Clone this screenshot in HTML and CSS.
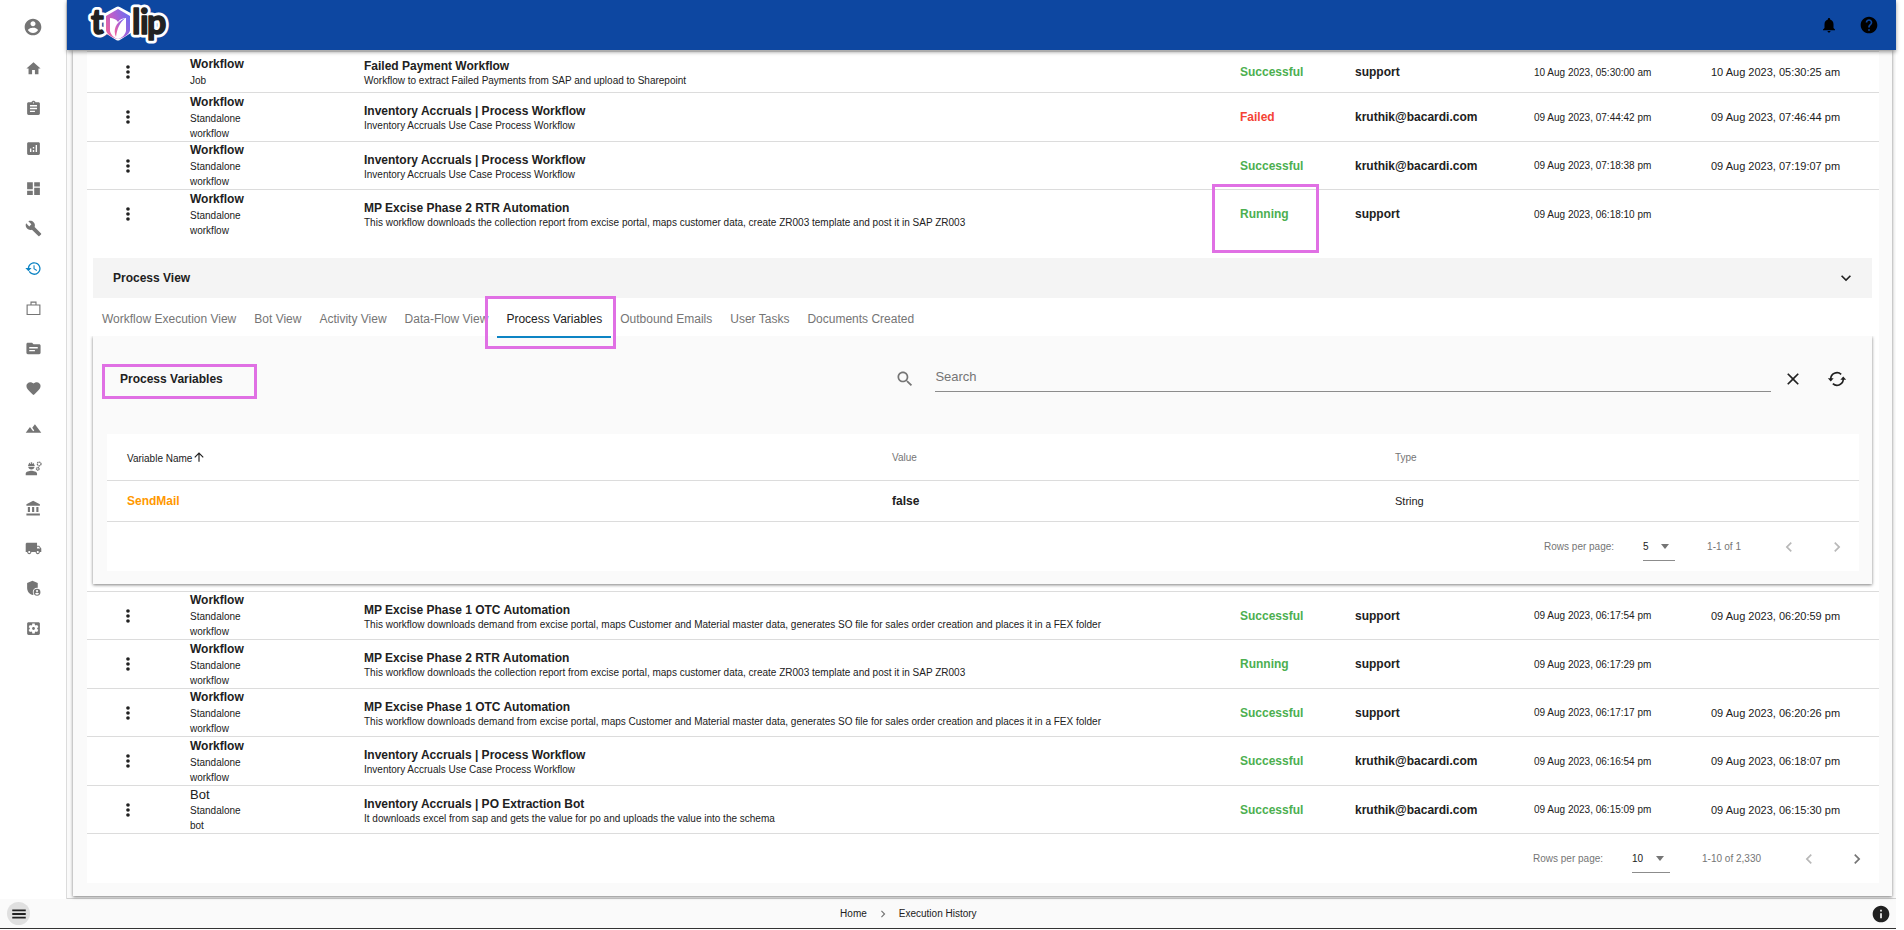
FILE: index.html
```html
<!DOCTYPE html>
<html lang="en">
<head>
    <meta charset="utf-8">
    <title>Execution History</title>
    <link rel="stylesheet" href="styles.css">
</head>
<body>
    <!-- icon set -->
    <svg class="sprite" aria-hidden="true">
        <symbol id="account" viewBox="0 0 24 24"><path d="M12 2C6.48 2 2 6.48 2 12s4.48 10 10 10 10-4.48 10-10S17.52 2 12 2zm0 3c1.66 0 3 1.34 3 3s-1.34 3-3 3-3-1.34-3-3 1.34-3 3-3zm0 14.2c-2.5 0-4.71-1.28-6-3.22.03-1.99 4-3.08 6-3.08 1.99 0 5.97 1.09 6 3.08-1.29 1.94-3.5 3.22-6 3.22z"/></symbol>
        <symbol id="home" viewBox="0 0 24 24"><path d="M10 20v-6h4v6h5v-8h3L12 3 2 12h3v8z"/></symbol>
        <symbol id="assignment" viewBox="0 0 24 24"><path d="M19 3h-4.18C14.4 1.84 13.3 1 12 1c-1.3 0-2.4.84-2.82 2H5c-1.1 0-2 .9-2 2v14c0 1.1.9 2 2 2h14c1.1 0 2-.9 2-2V5c0-1.1-.9-2-2-2zm-7 0c.55 0 1 .45 1 1s-.45 1-1 1-1-.45-1-1 .45-1 1-1zm2 14H7v-2h7v2zm3-4H7v-2h10v2zm0-4H7V7h10v2z"/></symbol>
        <symbol id="analytics" viewBox="0 0 24 24"><path d="M19 3H5c-1.1 0-2 .9-2 2v14c0 1.1.9 2 2 2h14c1.1 0 2-.9 2-2V5c0-1.1-.9-2-2-2zM9 17H7v-5h2v5zm4 0h-2v-3h2v3zm0-5h-2v-2h2v2zm4 5h-2V7h2v10z"/></symbol>
        <symbol id="dashboard" viewBox="0 0 24 24"><path d="M3 13h8V3H3v10zm0 8h8v-6H3v6zm10 0h8V11h-8v10zm0-18v6h8V3h-8z"/></symbol>
        <symbol id="build" viewBox="0 0 24 24"><path d="M22.7 19l-9.1-9.1c.9-2.3.4-5-1.5-6.9-2-2-5-2.4-7.4-1.3L9 6 6 9 1.6 4.7C.4 7.1.9 10.1 2.9 12.1c1.9 1.9 4.6 2.4 6.9 1.5l9.1 9.1c.4.4 1 .4 1.4 0l2.3-2.3c.5-.4.5-1.1.1-1.4z"/></symbol>
        <symbol id="history" viewBox="0 0 24 24"><path d="M13 3C8.3 3 4.3 6.6 4 11.2H.5L4.9 16l4.3-4.8H5.8C6.2 7.7 9.3 4.8 13 4.8c4 0 7.2 3.2 7.2 7.2s-3.2 7.2-7.2 7.2c-2.6 0-4.9-1.4-6.2-3.5l-1.5 1C6.9 19.3 9.8 21 13 21c5 0 9-4 9-9s-4-9-9-9zm-1 4.5v5.3l4.3 2.6.7-1.2-3.5-2.1V7.5H12z"/></symbol>
        <symbol id="work" viewBox="0 0 24 24"><path d="M3 7h18v13.5H3zM8.5 7V3h7v4" fill="none" stroke="currentColor" stroke-width="1.6"/></symbol>
        <symbol id="source" viewBox="0 0 24 24"><path d="M20 6h-8l-2-2H4c-1.1 0-2 .9-2 2v12c0 1.1.9 2 2 2h16c1.1 0 2-.9 2-2V8c0-1.1-.9-2-2-2zm-6 10H6v-2h8v2zm4-4H6v-2h12v2z"/></symbol>
        <symbol id="favorite" viewBox="0 0 24 24"><path d="M12 21.35l-1.45-1.32C5.4 15.36 2 12.28 2 8.5 2 5.42 4.42 3 7.5 3c1.74 0 3.41.81 4.5 2.09C13.09 3.81 14.76 3 16.5 3 19.58 3 22 5.42 22 8.5c0 3.78-3.4 6.86-8.55 11.54L12 21.35z"/></symbol>
        <symbol id="terrain" viewBox="0 0 24 24"><path d="M14 6l-3.75 5 2.85 3.8-1.6 1.2C9.81 13.75 7 10 7 10l-6 8h22L14 6z"/></symbol>
        <symbol id="engineering" viewBox="0 0 24 24"><path d="M9 15c-2.7 0-8 1.3-8 4v2.5h16V19c0-2.7-5.3-4-8-4zM4.5 9.5h9c-.2 2.2-2.2 4-4.5 4s-4.3-1.8-4.5-4zM13.8 8.5H4.2V7.3h.6C4.9 5.7 5.9 4.3 7.2 3.6V5.5h1V3.2h1.6v2.3h1V3.6c1.3.7 2.3 2.1 2.4 3.7h.6z"/><g fill="none" stroke="currentColor" stroke-width="1.8"><circle cx="20" cy="5.5" r="2.6" stroke-dasharray="2 .72"/><circle cx="18" cy="12.5" r="1.9" stroke-dasharray="1.6 .4"/></g></symbol>
        <symbol id="bank" viewBox="0 0 24 24"><path d="M4 10v7h3v-7H4zm6 0v7h3v-7h-3zM2 22h19v-3H2v3zm14-12v7h3v-7h-3zm-4.5-9L2 6v2h19V6l-9.5-5z"/></symbol>
        <symbol id="shipping" viewBox="0 0 24 24"><path d="M20 8h-3V4H3c-1.1 0-2 .9-2 2v11h2c0 1.66 1.34 3 3 3s3-1.34 3-3h6c0 1.66 1.34 3 3 3s3-1.34 3-3h2v-5l-3-4zM6 18.5c-.83 0-1.5-.67-1.5-1.5s.67-1.5 1.5-1.5 1.5.67 1.5 1.5-.67 1.5-1.5 1.5zm13.5-9l1.96 2.5H17V9.5h2.5zm-1.5 9c-.83 0-1.5-.67-1.5-1.5s.67-1.5 1.5-1.5 1.5.67 1.5 1.5-.67 1.5-1.5 1.5z"/></symbol>
        <symbol id="admin" viewBox="0 0 24 24"><path d="M17 11c.34 0 .67.04 1 .09V4.27L10.5 1 3 4.27v6.91c0 4.54 3.2 8.79 7.5 9.82.55-.13 1.08-.32 1.6-.55-.69-.98-1.1-2.17-1.1-3.45 0-3.31 2.69-6 6-6z"/><path d="M17 12.5a4.8 4.8 0 1 0 0 9.6 4.8 4.8 0 0 0 0-9.6zm0 1.6a1.5 1.5 0 1 1 0 3 1.5 1.5 0 0 1 0-3zm0 6.6c-1.1 0-2.1-.6-2.7-1.4.1-.9 1.8-1.3 2.7-1.3s2.6.4 2.7 1.3c-.6.8-1.6 1.4-2.7 1.4z"/></symbol>
        <symbol id="settings" viewBox="0 0 24 24"><path d="M12 10c-1.1 0-2 .9-2 2s.9 2 2 2 2-.9 2-2-.9-2-2-2zm7-7H5c-1.11 0-2 .9-2 2v14c0 1.1.89 2 2 2h14c1.11 0 2-.9 2-2V5c0-1.1-.89-2-2-2zm-1.75 9c0 .23-.02.46-.05.68l1.48 1.16c.13.11.17.3.08.45l-1.4 2.42c-.09.15-.27.21-.43.15l-1.74-.7c-.36.28-.76.51-1.18.69l-.26 1.85c-.03.17-.18.3-.35.3h-2.8c-.17 0-.32-.13-.35-.29l-.26-1.85c-.43-.18-.82-.41-1.18-.69l-1.74.7c-.16.06-.34 0-.43-.15l-1.4-2.42c-.09-.15-.05-.34.08-.45l1.48-1.16c-.03-.23-.05-.46-.05-.69 0-.23.02-.46.05-.68l-1.48-1.16c-.13-.11-.17-.3-.08-.45l1.4-2.42c.09-.15.27-.21.43-.15l1.74.7c.36-.28.76-.51 1.18-.69l.26-1.85c.03-.17.18-.3.35-.3h2.8c.17 0 .32.13.35.29l.26 1.85c.43.18.82.41 1.18.69l1.74-.7c.16-.06.34 0 .43.15l1.4 2.42c.09.15.05.34-.08.45l-1.48 1.16c.03.23.05.46.05.69z"/></symbol>
        <symbol id="bell" viewBox="0 0 24 24"><path d="M12 22c1.1 0 2-.9 2-2h-4c0 1.1.89 2 2 2zm6-6v-5c0-3.07-1.64-5.64-4.5-6.32V4c0-.83-.67-1.5-1.5-1.5s-1.5.67-1.5 1.5v.68C7.63 5.36 6 7.92 6 11v5l-2 2v1h16v-1l-2-2z"/></symbol>
        <symbol id="help" viewBox="0 0 24 24"><path d="M12 2C6.48 2 2 6.48 2 12s4.48 10 10 10 10-4.48 10-10S17.52 2 12 2zm1 17h-2v-2h2v2zm2.07-7.75l-.9.92C13.45 12.9 13 13.5 13 15h-2v-.5c0-1.1.45-2.1 1.17-2.83l1.24-1.26c.37-.36.59-.86.59-1.41 0-1.1-.9-2-2-2s-2 .9-2 2H8c0-2.21 1.79-4 4-4s4 1.79 4 4c0 .88-.36 1.68-.93 2.25z"/></symbol>
        <symbol id="info" viewBox="0 0 24 24"><path d="M12 2C6.48 2 2 6.48 2 12s4.48 10 10 10 10-4.48 10-10S17.52 2 12 2zm1 15h-2v-6h2v6zm0-8h-2V7h2v2z"/></symbol>
        <symbol id="more" viewBox="0 0 24 24"><circle cx="12" cy="6" r="2.2"/><circle cx="12" cy="12" r="2.2"/><circle cx="12" cy="18" r="2.2"/></symbol>
        <symbol id="menu" viewBox="0 0 24 24"><path d="M3 18h18v-2.4H3V18zm0-4.8h18v-2.4H3v2.4zM3 6v2.4h18V6H3z"/></symbol>
        <symbol id="down" viewBox="0 0 24 24"><path d="M7.41 8.59L12 13.17l4.59-4.58L18 10l-6 6-6-6 1.41-1.41z"/></symbol>
        <symbol id="left" viewBox="0 0 24 24"><path d="M15.41 7.41L14 6l-6 6 6 6 1.41-1.41L10.83 12z"/></symbol>
        <symbol id="right" viewBox="0 0 24 24"><path d="M10 6L8.59 7.41 13.17 12l-4.58 4.59L10 18l6-6z"/></symbol>
        <symbol id="search-icon" viewBox="0 0 24 24"><path d="M15.5 14h-.79l-.28-.27C15.41 12.59 16 11.11 16 9.5 16 5.91 13.09 3 9.5 3S3 5.91 3 9.5 5.91 16 9.5 16c1.61 0 3.09-.59 4.23-1.57l.27.28v.79l5 4.99L20.49 19l-4.99-5zm-6 0C7.01 14 5 11.99 5 9.5S7.01 5 9.5 5 14 7.01 14 9.5 11.99 14 9.5 14z"/></symbol>
        <symbol id="clear" viewBox="0 0 24 24"><path d="M19 6.41L17.59 5 12 10.59 6.41 5 5 6.41 10.59 12 5 17.59 6.41 19 12 13.41 17.59 19 19 17.59 13.41 12z"/></symbol>
        <symbol id="refresh" viewBox="0 0 24 24"><path d="M4.5 12A7.5 7.5 0 0 1 17 6.4M19.5 12A7.5 7.5 0 0 1 7 17.6" fill="none" stroke="currentColor" stroke-width="2"/><path d="M1 11h7l-3.5 4zM16 13h7l-3.5-4z"/></symbol>
        <symbol id="up" viewBox="0 0 24 24"><path d="M4 12l1.41 1.41L11 7.83V20h2V7.83l5.58 5.59L20 12l-8-8-8 8z"/></symbol>
    </svg>

    <div class="app">
        <div class="layout">
            <nav class="sidebar">
                <a href="#" class="profile" aria-label="Profile"><svg><use href="#account"/></svg></a>
                <a href="#" aria-label="Home"><svg><use href="#home"/></svg></a>
                <a href="#" aria-label="Tasks"><svg><use href="#assignment"/></svg></a>
                <a href="#" aria-label="Analytics"><svg><use href="#analytics"/></svg></a>
                <a href="#" aria-label="Dashboard"><svg><use href="#dashboard"/></svg></a>
                <a href="#" aria-label="Build"><svg><use href="#build"/></svg></a>
                <a href="#" class="active" aria-label="Execution history"><svg><use href="#history"/></svg></a>
                <a href="#" aria-label="Work"><svg><use href="#work"/></svg></a>
                <a href="#" aria-label="Files"><svg><use href="#source"/></svg></a>
                <a href="#" aria-label="Health"><svg><use href="#favorite"/></svg></a>
                <a href="#" aria-label="Environments"><svg><use href="#terrain"/></svg></a>
                <a href="#" aria-label="Engineering"><svg><use href="#engineering"/></svg></a>
                <a href="#" aria-label="Organisation"><svg><use href="#bank"/></svg></a>
                <a href="#" aria-label="Deployments"><svg><use href="#shipping"/></svg></a>
                <a href="#" aria-label="Admin"><svg><use href="#admin"/></svg></a>
                <a href="#" aria-label="Settings"><svg><use href="#settings"/></svg></a>
            </nav>

            <div class="page">
                <header class="topbar">
                    <svg class="logo" viewBox="0 0 90 46" role="img" aria-label="tulip">
                        <defs>
                            <linearGradient id="petal" x1="0" y1="0.8" x2="1" y2="0.3">
                                <stop offset="0" stop-color="#f0649c"/>
                                <stop offset="0.5" stop-color="#b45fd0"/>
                                <stop offset="1" stop-color="#6d6df0"/>
                            </linearGradient>
                        </defs>
                        <g class="logo-outline">
                            <text x="5 46 54 61" y="32">tlip</text>
                            <path d="M32 8l11 6v14l-11 7-11-7V14z"/>
                        </g>
                        <text class="logo-text" x="5 46 54 61" y="32">tlip</text>
                        <path d="M32 7l12 7v14c0 3-5 8-12 9-7-1-12-6-12-9V14z" fill="url(#petal)"/>
                        <path d="M24 16c3 0 6 1 8 4 2-3 5-4 8-4v13c-1 4-4 7-8 8-4-1-7-4-8-8z" fill="#fff"/>
                        <path d="M30 35c-3-7-1-14 9-19-5 5-8 10-9 19z" fill="url(#petal)"/>
                    </svg>
                    <button class="icon-btn bell" aria-label="Notifications"><svg><use href="#bell"/></svg></button>
                    <button class="icon-btn" aria-label="Help"><svg><use href="#help"/></svg></button>
                </header>

                <main class="card">
                    <div class="history">
                        <table class="runs">
                            <colgroup>
                                <col class="col-menu"><col class="col-type"><col><col class="col-status"><col class="col-user"><col class="col-date"><col class="col-end">
                            </colgroup>
                            <tbody>
                                <tr class="short">
                                    <td class="menu"><button class="icon-btn" aria-label="More"><svg><use href="#more"/></svg></button></td>
                                    <td><p class="type">Workflow</p><p class="mode">Job</p></td>
                                    <td><p class="name">Failed Payment Workflow</p><p class="desc">Workflow to extract Failed Payments from SAP and upload to Sharepoint</p></td>
                                    <td class="status">Successful</td>
                                    <td class="user">support</td>
                                    <td class="started">10 Aug 2023, 05:30:00 am</td>
                                    <td class="ended">10 Aug 2023, 05:30:25 am</td>
                                </tr>
                                <tr>
                                    <td class="menu"><button class="icon-btn" aria-label="More"><svg><use href="#more"/></svg></button></td>
                                    <td><p class="type">Workflow</p><p class="mode">Standalone<br>workflow</p></td>
                                    <td><p class="name">Inventory Accruals | Process Workflow</p><p class="desc">Inventory Accruals Use Case Process Workflow</p></td>
                                    <td class="status failed">Failed</td>
                                    <td class="user">kruthik@bacardi.com</td>
                                    <td class="started">09 Aug 2023, 07:44:42 pm</td>
                                    <td class="ended">09 Aug 2023, 07:46:44 pm</td>
                                </tr>
                                <tr>
                                    <td class="menu"><button class="icon-btn" aria-label="More"><svg><use href="#more"/></svg></button></td>
                                    <td><p class="type">Workflow</p><p class="mode">Standalone<br>workflow</p></td>
                                    <td><p class="name">Inventory Accruals | Process Workflow</p><p class="desc">Inventory Accruals Use Case Process Workflow</p></td>
                                    <td class="status">Successful</td>
                                    <td class="user">kruthik@bacardi.com</td>
                                    <td class="started">09 Aug 2023, 07:18:38 pm</td>
                                    <td class="ended">09 Aug 2023, 07:19:07 pm</td>
                                </tr>
                            </tbody>
                            <tbody>
                                <tr class="open">
                                    <td class="menu"><button class="icon-btn" aria-label="More"><svg><use href="#more"/></svg></button></td>
                                    <td><p class="type">Workflow</p><p class="mode">Standalone<br>workflow</p></td>
                                    <td><p class="name">MP Excise Phase 2 RTR Automation</p><p class="desc">This workflow downloads the collection report from excise portal, maps customer data, create ZR003 template and post it in SAP ZR003</p></td>
                                    <td class="status"><span class="marked">Running<span class="mark mark-status"></span></span></td>
                                    <td class="user">support</td>
                                    <td class="started">09 Aug 2023, 06:18:10 pm</td>
                                    <td class="ended"></td>
                                </tr>
                                <tr>
                                    <td class="details" colspan="7">
                                        <div class="process-bar">
                                            <h2>Process View</h2>
                                            <button class="icon-btn" aria-label="Collapse"><svg><use href="#down"/></svg></button>
                                        </div>
                                        <div class="tabs" role="tablist">
                                            <button role="tab">Workflow Execution View</button>
                                            <button role="tab">Bot View</button>
                                            <button role="tab">Activity View</button>
                                            <button role="tab">Data-Flow View</button>
                                            <button role="tab" class="selected" aria-selected="true">Process Variables<span class="mark mark-tab"></span></button>
                                            <button role="tab">Outbound Emails</button>
                                            <button role="tab">User Tasks</button>
                                            <button role="tab">Documents Created</button>
                                        </div>
                                        <section class="variables">
                                            <div class="toolbar">
                                                <h2><span class="marked">Process Variables<span class="mark mark-title"></span></span></h2>
                                                <label for="search" aria-label="Search"><svg><use href="#search-icon"/></svg></label>
                                                <input type="text" id="search" placeholder="Search">
                                                <button class="icon-btn" aria-label="Clear"><svg><use href="#clear"/></svg></button>
                                                <button class="icon-btn" aria-label="Refresh"><svg><use href="#refresh"/></svg></button>
                                            </div>
                                            <table class="vars">
                                                <colgroup><col class="col-var"><col><col class="col-kind"></colgroup>
                                                <thead>
                                                    <tr>
                                                        <th class="sorted">Variable Name<svg><use href="#up"/></svg></th>
                                                        <th>Value</th>
                                                        <th>Type</th>
                                                    </tr>
                                                </thead>
                                                <tbody>
                                                    <tr>
                                                        <td class="var-name">SendMail</td>
                                                        <td class="var-value">false</td>
                                                        <td class="ended">String</td>
                                                    </tr>
                                                </tbody>
                                            </table>
                                            <div class="pager">
                                                <label for="varRows">Rows per page:</label>
                                                <span class="select"><select id="varRows"><option>5</option></select></span>
                                                <span class="count">1-1 of 1</span>
                                                <button class="icon-btn" aria-label="Previous page" disabled><svg><use href="#left"/></svg></button>
                                                <button class="icon-btn" aria-label="Next page" disabled><svg><use href="#right"/></svg></button>
                                            </div>
                                        </section>
                                    </td>
                                </tr>
                            </tbody>
                            <tbody>
                                <tr>
                                    <td class="menu"><button class="icon-btn" aria-label="More"><svg><use href="#more"/></svg></button></td>
                                    <td><p class="type">Workflow</p><p class="mode">Standalone<br>workflow</p></td>
                                    <td><p class="name">MP Excise Phase 1 OTC Automation</p><p class="desc">This workflow downloads demand from excise portal, maps Customer and Material master data, generates SO file for sales order creation and places it in a FEX folder</p></td>
                                    <td class="status">Successful</td>
                                    <td class="user">support</td>
                                    <td class="started">09 Aug 2023, 06:17:54 pm</td>
                                    <td class="ended">09 Aug 2023, 06:20:59 pm</td>
                                </tr>
                                <tr>
                                    <td class="menu"><button class="icon-btn" aria-label="More"><svg><use href="#more"/></svg></button></td>
                                    <td><p class="type">Workflow</p><p class="mode">Standalone<br>workflow</p></td>
                                    <td><p class="name">MP Excise Phase 2 RTR Automation</p><p class="desc">This workflow downloads the collection report from excise portal, maps customer data, create ZR003 template and post it in SAP ZR003</p></td>
                                    <td class="status">Running</td>
                                    <td class="user">support</td>
                                    <td class="started">09 Aug 2023, 06:17:29 pm</td>
                                    <td class="ended"></td>
                                </tr>
                                <tr>
                                    <td class="menu"><button class="icon-btn" aria-label="More"><svg><use href="#more"/></svg></button></td>
                                    <td><p class="type">Workflow</p><p class="mode">Standalone<br>workflow</p></td>
                                    <td><p class="name">MP Excise Phase 1 OTC Automation</p><p class="desc">This workflow downloads demand from excise portal, maps Customer and Material master data, generates SO file for sales order creation and places it in a FEX folder</p></td>
                                    <td class="status">Successful</td>
                                    <td class="user">support</td>
                                    <td class="started">09 Aug 2023, 06:17:17 pm</td>
                                    <td class="ended">09 Aug 2023, 06:20:26 pm</td>
                                </tr>
                                <tr>
                                    <td class="menu"><button class="icon-btn" aria-label="More"><svg><use href="#more"/></svg></button></td>
                                    <td><p class="type">Workflow</p><p class="mode">Standalone<br>workflow</p></td>
                                    <td><p class="name">Inventory Accruals | Process Workflow</p><p class="desc">Inventory Accruals Use Case Process Workflow</p></td>
                                    <td class="status">Successful</td>
                                    <td class="user">kruthik@bacardi.com</td>
                                    <td class="started">09 Aug 2023, 06:16:54 pm</td>
                                    <td class="ended">09 Aug 2023, 06:18:07 pm</td>
                                </tr>
                                <tr>
                                    <td class="menu"><button class="icon-btn" aria-label="More"><svg><use href="#more"/></svg></button></td>
                                    <td><p class="type bot">Bot</p><p class="mode">Standalone<br>bot</p></td>
                                    <td><p class="name">Inventory Accruals | PO Extraction Bot</p><p class="desc">It downloads excel from sap and gets the value for po and uploads the value into the schema</p></td>
                                    <td class="status">Successful</td>
                                    <td class="user">kruthik@bacardi.com</td>
                                    <td class="started">09 Aug 2023, 06:15:09 pm</td>
                                    <td class="ended">09 Aug 2023, 06:15:30 pm</td>
                                </tr>
                            </tbody>
                        </table>
                        <div class="pager">
                            <label for="runRows">Rows per page:</label>
                            <span class="select wide"><select id="runRows"><option>10</option></select></span>
                            <span class="count">1-10 of 2,330</span>
                            <button class="icon-btn" aria-label="Previous page" disabled><svg><use href="#left"/></svg></button>
                            <button class="icon-btn" aria-label="Next page"><svg><use href="#right"/></svg></button>
                        </div>
                    </div>
                </main>
            </div>
        </div>

        <footer class="footer">
            <button class="icon-btn toggle" aria-label="Menu"><svg><use href="#menu"/></svg></button>
            <nav class="crumbs">
                <a href="#">Home</a>
                <svg><use href="#right"/></svg>
                <a href="#">Execution History</a>
            </nav>
            <button class="icon-btn info" aria-label="Info"><svg><use href="#info"/></svg></button>
        </footer>
    </div>
</body>
</html>
```
FILE: styles.css
```css
* {
    box-sizing: border-box;
}
body {
    margin: 0;
    padding-right: 8px;
    background: #fff;
    color: #212121;
    font-family: "Liberation Sans", Arial, sans-serif;
    font-size: 12px;
}
h2, p {
    margin: 0;
    font-size: 12px;
}
a {
    color: inherit;
    text-decoration: none;
}
svg {
    display: block;
    width: 20px;
    height: 20px;
    fill: currentColor;
}
.sprite {
    position: absolute;
    width: 0;
    height: 0;
}
button, input, select {
    font-family: inherit;
    color: inherit;
    background: none;
    border: none;
    padding: 0;
    outline: none;
}
.icon-btn {
    display: flex;
    align-items: center;
    justify-content: center;
    width: 32px;
    height: 32px;
    cursor: pointer;
}

.app {
    background: #fafafa;
    border-bottom: 1px solid #333;
}
.layout {
    display: flex;
}

/* sidebar */
.sidebar {
    width: 67px;
    padding-top: 6px;
    background: #fff;
    border-right: 1px solid #dcdcdc;
    color: #757575;
}
.sidebar a {
    display: flex;
    align-items: center;
    justify-content: center;
    height: 40px;
}
.sidebar svg {
    width: 17px;
    height: 17px;
}
.sidebar .profile {
    height: 42px;
}
.sidebar .profile svg {
    width: 20px;
    height: 20px;
}
.sidebar .active {
    color: #0d84c4;
}

/* header */
.page {
    flex: 1;
    min-width: 0;
    border-bottom: 1px solid #cfcfcf;
}
.topbar {
    position: relative;
    z-index: 2;
    display: flex;
    align-items: center;
    height: 50px;
    padding: 0 11px 0 19px;
    background: #0d47a1;
    color: #000;
    box-shadow: 0 2px 4px rgba(0, 0, 0, 0.4);
}
.topbar .bell {
    margin-right: 8px;
}
.topbar .bell svg {
    width: 18px;
    height: 18px;
}
.logo {
    width: 90px;
    height: 46px;
    margin-right: auto;
}
.logo text {
    font-family: Lato, sans-serif;
    font-size: 34px;
    font-weight: 700;
}
.logo-text {
    fill: #222;
    stroke: #222;
    stroke-width: 1.5;
    stroke-linejoin: round;
}
.logo-outline {
    fill: #fff;
    stroke: #fff;
    stroke-width: 7;
    stroke-linejoin: round;
}

/* history */
.card {
    margin: 0 4px 2px 6px;
    padding: 1px 13px 13px 14px;
    box-shadow: 0 1px 3px rgba(0, 0, 0, 0.5);
}
.history {
    background: #fff;
    border-top: 1px solid #e0e0e0;
}
table {
    width: 100%;
    table-layout: fixed;
    border-spacing: 0;
}
th, td {
    padding: 0 0 0 16px;
    text-align: left;
    border-bottom: 1px solid #dcdcdc;
}
.runs td {
    height: 48px;
}
.runs > tbody > tr:nth-child(even) > td {
    height: 49px;
}
.runs .short td {
    height: 41px;
}
.runs .open td {
    border-bottom: none;
}
.col-menu {
    width: 87px;
}
.col-type {
    width: 174px;
}
.col-status {
    width: 115px;
}
.col-user {
    width: 179px;
}
.col-date {
    width: 177px;
}
.col-end {
    width: 184px;
}
.runs .menu {
    padding-left: 31px;
}
.menu .icon-btn {
    width: 20px;
    height: 20px;
}
.type {
    font-weight: bold;
    line-height: 17px;
}
.bot {
    font-size: 13px;
    font-weight: normal;
}
.mode {
    font-size: 10px;
    line-height: 15px;
}
.name {
    padding-top: 3px;
    font-weight: bold;
    line-height: 15px;
}
.desc {
    font-size: 10px;
    line-height: 14px;
    white-space: nowrap;
}
.status {
    color: #4caf50;
    font-weight: bold;
}
.failed {
    color: #f44336;
}
.user {
    font-weight: bold;
}
.started {
    font-size: 10px;
}
.ended {
    font-size: 11px;
}

/* highlight boxes */
.marked {
    position: relative;
}
.mark {
    position: absolute;
    border: 3px solid #e070e4;
    pointer-events: none;
}
.mark-status {
    left: -28px;
    top: -23px;
    width: 107px;
    height: 69px;
}
.mark-tab {
    left: -12px;
    top: -2px;
    width: 131px;
    height: 53px;
}
.mark-title {
    left: -18px;
    top: -8px;
    width: 155px;
    height: 35px;
}

/* process view */
.runs .details {
    padding: 20px 7px 7px 6px;
}
.process-bar {
    display: flex;
    align-items: center;
    justify-content: space-between;
    height: 40px;
    padding: 0 10px 0 20px;
    background: #f4f4f4;
}
.tabs {
    display: flex;
    height: 38px;
}
.tabs button {
    position: relative;
    padding: 4px 9px 0;
    color: #757575;
    font-size: 12px;
    cursor: pointer;
}
.tabs .selected {
    z-index: 1;
    color: #212121;
    box-shadow: 0 2px 0 #0d84c4;
}
.variables {
    padding: 0 13px 13px 14px;
    background: #fafafa;
    box-shadow: 0 1px 3px rgba(0, 0, 0, 0.5);
    clip-path: inset(0 -4px -4px -4px);
}
.toolbar {
    display: flex;
    align-items: center;
    height: 86px;
    margin-bottom: 12px;
}
.toolbar h2 {
    flex: 0 0 45%;
    padding-left: 13px;
}
.toolbar label {
    margin-right: 20px;
    color: #757575;
}
.toolbar input {
    flex: 1;
    height: 26px;
    padding-bottom: 5px;
    border-bottom: 1px solid #8c8c8c;
    font-size: 13px;
}
.toolbar input::placeholder {
    color: #757575;
    opacity: 1;
}
.toolbar .icon-btn {
    margin: 0 6px;
}

.vars {
    background: #fff;
}
.col-var {
    width: 769px;
}
.col-kind {
    width: 480px;
}
.vars th {
    height: 47px;
    color: #757575;
    font-size: 10px;
    font-weight: normal;
}
.runs .vars td {
    height: 41px;
}
.vars th:first-child, .vars td:first-child {
    padding-left: 20px;
}
.vars .sorted {
    color: #212121;
}
.sorted svg {
    display: inline-block;
    width: 14px;
    height: 14px;
    vertical-align: -2px;
}
.var-name {
    color: #ff9800;
    font-weight: bold;
}
.var-value {
    font-weight: bold;
}

/* pagination */
.pager {
    display: flex;
    align-items: center;
    justify-content: flex-end;
    height: 49px;
    padding-right: 6px;
    background: #fff;
    color: #757575;
    font-size: 10px;
}
.select {
    position: relative;
    width: 32px;
    margin: 0 32px 0 29px;
    color: #212121;
}
.select.wide {
    width: 38px;
}
.select::after {
    content: "";
    position: absolute;
    right: 6px;
    top: 11px;
    border: 4px solid transparent;
    border-top: 5px solid #757575;
    border-bottom: none;
    pointer-events: none;
}
.select select {
    width: 100%;
    height: 28px;
    appearance: none;
    border-bottom: 1px solid #8c8c8c;
    font-size: 10px;
}
.count {
    margin-right: 32px;
}
.pager .icon-btn {
    margin-left: 16px;
}
.pager .count + .icon-btn {
    margin-left: 0;
}
.pager .icon-btn:disabled {
    color: #b8b8b8;
}

/* footer */
.footer {
    display: flex;
    align-items: center;
    height: 29px;
    padding: 0 5px 0 7px;
}
.toggle {
    width: 23px;
    height: 23px;
    border-radius: 50%;
    background: #e0e0e0;
}
.toggle svg {
    width: 18px;
    height: 18px;
}
.crumbs {
    display: flex;
    align-items: center;
    gap: 9px;
    flex: 1;
    padding-left: 43%;
    font-size: 10px;
}
.crumbs svg {
    width: 14px;
    height: 14px;
    color: #757575;
}
.info {
    width: 20px;
    height: 20px;
}
```
